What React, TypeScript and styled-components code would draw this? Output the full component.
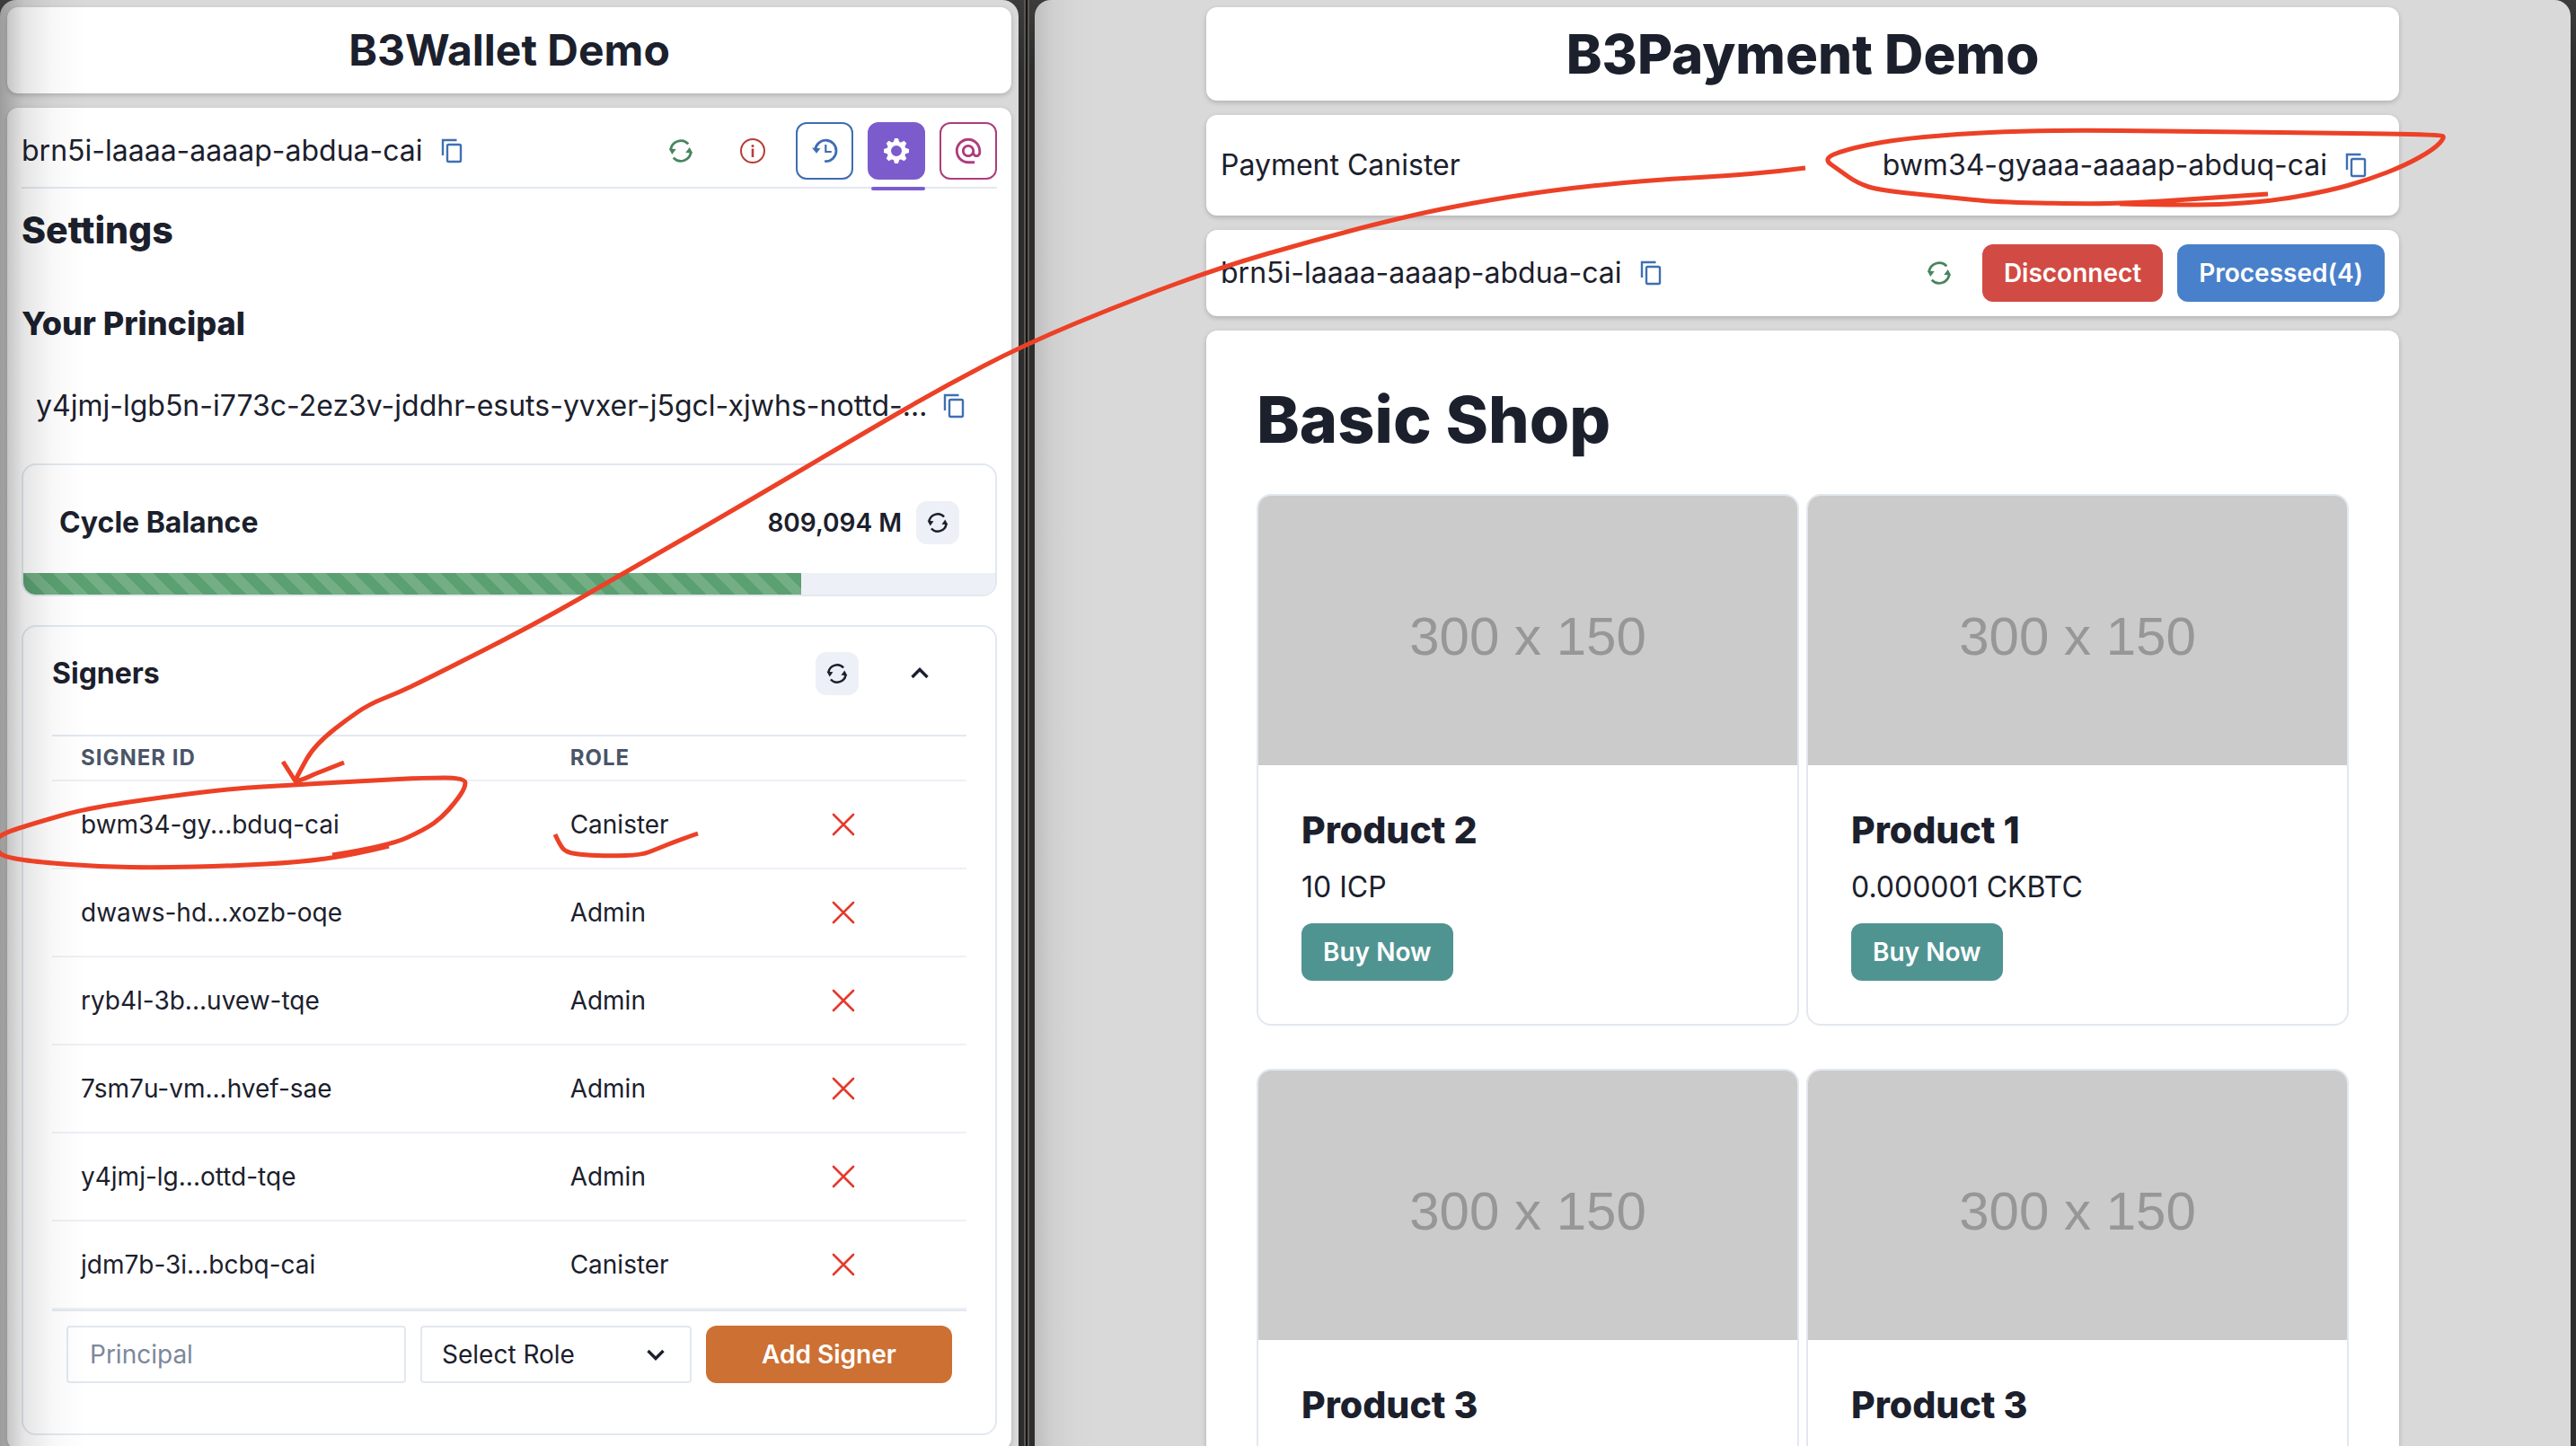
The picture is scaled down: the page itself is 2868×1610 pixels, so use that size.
import React from 'react';
import styled, { createGlobalStyle, css } from 'styled-components';
import { MdAlternateEmail } from 'react-icons/md';

const ink = '#1b202c';
const line = '#e2e8f0';
const softLine = '#edf0f6';

const GlobalStyle = createGlobalStyle`
  *, *::before, *::after { box-sizing: border-box; }
  body {
    margin: 0;
    background: #2e2e2e;
    color: ${ink};
    font-family: Inter, 'Liberation Sans', sans-serif;
    font-size: 32px;
    line-height: 48px;
  }
  h1, h2, h3, p { margin: 0; }
  button, input, select { font: inherit; color: inherit; margin: 0; }
`;

/* ---------- desktop and windows ---------- */

const Desktop = styled.div`
  position: relative;
  display: grid;
  grid-template-columns: minmax(0, 63fr) 18px minmax(0, 95fr) 6px;
  height: 100vh;
  overflow: hidden;
  background: linear-gradient(#3c3c3c, #2d2d2d 80px);
`;

const Seam = styled.div`
  width: 6px;
  justify-self: center;
  background: #17120a;
  border: solid #565656;
  border-width: 0 2px;
`;

const Window = styled.div<{ $shade: number; $reach: number }>`
  position: relative;
  overflow: hidden;
  border-radius: 18px 18px 0 0;
  background: #d9d9d9;

  &::after {
    content: '';
    position: absolute;
    inset: 0 auto 0 0;
    width: ${(p) => p.$reach}px;
    background: linear-gradient(
      to right,
      rgba(0, 0, 0, ${(p) => p.$shade}),
      rgba(0, 0, 0, ${(p) => p.$shade * 0.36}) 28%,
      rgba(0, 0, 0, ${(p) => p.$shade * 0.1}) 62%,
      transparent
    );
    pointer-events: none;
  }
`;

const Stack = styled.main<{ $max?: number }>`
  display: flex;
  flex-direction: column;
  gap: 16px;
  width: 100%;
  max-width: ${(p) => (p.$max ? `${p.$max}px` : 'none')};
  margin: 0 auto;
  padding: 8px ${(p) => (p.$max ? 0 : 8)}px;
`;

const Card = styled.section<{ $pad?: string }>`
  border-radius: 12px;
  padding: ${(p) => p.$pad ?? '16px'};
  background: #fff;
  box-shadow: 0 2px 6px rgba(0, 0, 0, 0.12), 0 2px 4px rgba(0, 0, 0, 0.08);
`;

const PageTitle = styled.h1<{ $size: number; $weight?: number }>`
  font-size: ${(p) => p.$size}px;
  font-weight: ${(p) => p.$weight ?? 700};
  line-height: 72px;
  text-align: center;
`;

const Row = styled.div<{ $gap?: number; $pad?: string }>`
  display: flex;
  align-items: center;
  gap: ${(p) => p.$gap ?? 16}px;
  padding: ${(p) => p.$pad ?? '0'};
`;

const Grow = styled.span`
  flex: 1;
  min-width: 0;
`;

/* ---------- buttons ---------- */

const Button = styled.button<{ $bg: string }>`
  height: 64px;
  padding: 0 24px;
  border: 0;
  border-radius: 12px;
  background: ${(p) => p.$bg};
  color: #fff;
  font-size: 28px;
  font-weight: 600;
  white-space: nowrap;
`;

const IconButton = styled.button<{ $color?: string; $outline?: boolean; $active?: boolean; $small?: boolean; $fill?: string }>`
  position: relative;
  display: inline-flex;
  flex: none;
  align-items: center;
  justify-content: center;
  width: ${(p) => (p.$small ? 48 : 64)}px;
  height: ${(p) => (p.$small ? 48 : 64)}px;
  padding: 0;
  border: 2px solid ${(p) => (p.$outline ? p.$color : 'transparent')};
  border-radius: 12px;
  background: ${(p) => p.$fill ?? 'transparent'};
  color: ${(p) => p.$color ?? ink};

  ${(p) =>
    p.$active &&
    css`
      border-color: #7c5ccd;
      background: #7c5ccd;
      color: #fff;

      &::after {
        content: '';
        position: absolute;
        right: -2px;
        bottom: -14px;
        left: 2px;
        height: 4px;
        border-radius: 2px;
        background: #7c5ccd;
      }
    `}
`;

/* ---------- icons ---------- */

const CopyIcon = () => (
  <svg width="24" height="28" viewBox="0 0 24 28" fill="none" stroke="#3f6fb3" strokeWidth="2.4">
    <path d="M2 19V2h15.500" />
    <rect x="7" y="7" width="15" height="19" rx="1.5" />
  </svg>
);

const RefreshIcon = ({ size = 28 }: { size?: number }) => (
  <svg width={size} height={size} viewBox="-14 -14 28 28" fill="none" stroke="currentColor" strokeWidth="2.8">
    <path d="M-11.200-1.500A11.300 11.300 0 0 1 8.300-7.600" />
    <path d="M11.200 1.500A11.300 11.300 0 0 1-8.300 7.600" />
    <path d="M-13.300-2.500-5.300-2-9.700 4Z" fill="currentColor" stroke="none" />
    <path d="M13.300 2.500 5.300 2 9.700-4Z" fill="currentColor" stroke="none" />
  </svg>
);

const InfoIcon = () => (
  <svg width="28" height="28" viewBox="-14 -14 28 28" fill="none" stroke="currentColor" strokeWidth="2">
    <circle r="13" />
    <path d="M0-2.500V7" strokeWidth="2.6" />
    <circle cy="-5.5" r="1.5" fill="currentColor" stroke="none" />
  </svg>
);

const HistoryIcon = () => (
  <svg width="30" height="28" viewBox="-15 -14 30 28" fill="none" stroke="currentColor" strokeWidth="2.8">
    <path d="M-10.300-1.500A11.700 11.700 0 1 1 1.200 11.600" strokeLinecap="round" />
    <path d="M-14-3.500-4.500-2.800-9 2.800Z" fill="currentColor" stroke="none" />
    <path d="M1.300-7V1h6.500" strokeWidth="2.2" />
  </svg>
);

const GearIcon = () => (
  <svg width="28" height="28" viewBox="-14 -14 28 28" fill="none">
    <circle r="8.3" stroke="currentColor" strokeWidth="4.6" />
    {[0, 45, 90, 135, 180, 225, 270, 315].map((a) => (
      <path key={a} d="M-3.400-9.500-1.900-14H1.900L3.400-9.500Z" fill="currentColor" transform={`rotate(${a})`} />
    ))}
  </svg>
);

const ChevronIcon = ({ down }: { down?: boolean }) => (
  <svg width="24" height="24" viewBox="-12 -12 24 24" fill="none" stroke="currentColor" strokeWidth="3.4">
    <path d={down ? 'M-8.500-4 0 4.500 8.500-4' : 'M-8.500 4 0-4.500 8.500 4'} />
  </svg>
);

const CrossIcon = () => (
  <svg width="28" height="28" viewBox="-14 -14 28 28" stroke="#e5392c" strokeWidth="2.6" strokeLinecap="round">
    <path d="M-11-11 11 11M11-11-11 11" />
  </svg>
);

/* ---------- wallet ---------- */

const Toolbar = styled.header`
  display: flex;
  align-items: center;
  gap: 16px;
  padding-bottom: 8px;
  border-bottom: 2px solid ${line};
`;

const Heading = styled.h2<{ $size: number; $pad?: string; $weight?: number }>`
  padding: ${(p) => p.$pad ?? '0'};
  font-size: ${(p) => p.$size}px;
  font-weight: ${(p) => p.$weight ?? 800};
  line-height: 48px;
`;

const RowHeading = styled(Heading)`
  flex: 1;
  min-width: 0;
`;

const Principal = styled.span`
  flex: 1;
  min-width: 0;
  overflow: hidden;
  text-overflow: ellipsis;
  white-space: nowrap;
`;

const Box = styled.section<{ $pad?: string }>`
  margin-top: 32px;
  padding: ${(p) => p.$pad ?? '0'};
  overflow: hidden;
  border: 2px solid ${line};
  border-radius: 16px;
`;

const Amount = styled.span`
  font-size: 28px;
  font-weight: 600;
`;

const Track = styled.div`
  height: 24px;
  background: #edf0f6;
`;

const Bar = styled.div`
  height: 100%;
  background: #5aa070
    linear-gradient(
      45deg,
      rgba(255, 255, 255, 0.15) 25%,
      transparent 25% 50%,
      rgba(255, 255, 255, 0.15) 50% 75%,
      transparent 75%
    )
    0 0 / 32px 32px;
`;

const Table = styled.table`
  width: 100%;
  margin-top: 44px;
  border-collapse: separate;
  border-spacing: 0;
  border-top: 2px solid ${line};
  border-bottom: 2px solid ${line};
  table-layout: fixed;
  font-size: 28px;
  text-align: left;
`;

const Col = styled.col<{ $width: string }>`
  width: ${(p) => p.$width};
`;

const Th = styled.th`
  height: 50px;
  padding: 0 32px;
  border-bottom: 2px solid ${softLine};
  color: #4a5568;
  font-size: 24px;
  line-height: 32px;
  letter-spacing: 1px;
`;

const Td = styled.td`
  height: 98px;
  padding: 0 32px;
  border-bottom: 2px solid ${softLine};
`;

const RemoveButton = styled.button`
  display: flex;
  padding: 0;
  border: 0;
  background: none;
`;

const SignerForm = styled.form`
  display: grid;
  grid-template-columns: 378fr 302fr 274fr;
  gap: 16px;
  padding: 16px;
  font-size: 28px;
`;

const Input = styled.input`
  width: 100%;
  height: 64px;
  padding: 0 24px;
  border: 2px solid ${line};
  border-radius: 4px;
  background: #fff;
  outline: 0;

  &::placeholder {
    color: #7c879b;
    opacity: 1;
  }
`;

const SelectWrap = styled.div`
  position: relative;

  svg {
    position: absolute;
    top: 20px;
    right: 28px;
    pointer-events: none;
  }
`;

const Select = styled.select`
  width: 100%;
  height: 64px;
  padding: 0 64px 0 22px;
  appearance: none;
  border: 2px solid ${line};
  border-radius: 4px;
  background: #fff;
`;

const signers = [
  ['bwm34-gy...bduq-cai', 'Canister'],
  ['dwaws-hd...xozb-oqe', 'Admin'],
  ['ryb4l-3b...uvew-tqe', 'Admin'],
  ['7sm7u-vm...hvef-sae', 'Admin'],
  ['y4jmj-lg...ottd-tqe', 'Admin'],
  ['jdm7b-3i...bcbq-cai', 'Canister'],
];

const cycleShare = 80;

const Wallet = () => (
  <Stack>
    <Card $pad="12px 16px">
      <PageTitle $size={48}>B3Wallet Demo</PageTitle>
    </Card>
    <Card>
      <Toolbar>
        <Row as={Grow} $gap={8}>
          brn5i-laaaa-aaaap-abdua-cai
          <IconButton $small aria-label="Copy wallet canister"><CopyIcon /></IconButton>
        </Row>
        <IconButton $color="#48855e" aria-label="Refresh"><RefreshIcon /></IconButton>
        <IconButton $color="#b93c36" aria-label="Info"><InfoIcon /></IconButton>
        <IconButton $color="#3f6db1" $outline aria-label="History"><HistoryIcon /></IconButton>
        <IconButton $active aria-label="Settings"><GearIcon /></IconButton>
        <IconButton $color="#ad3d7d" $outline aria-label="Address"><MdAlternateEmail size={34} /></IconButton>
      </Toolbar>
      <Heading $size={41} $pad="22px 0 0">Settings</Heading>
      <Heading as="h3" $size={36} $pad="56px 0 0">Your Principal</Heading>
      <Row $gap={4} $pad="44px 24px 8px 16px">
        <Principal>y4jmj-lgb5n-i773c-2ez3v-jddhr-esuts-yvxer-j5gcl-xjwhs-nottd-tqe</Principal>
        <IconButton $small aria-label="Copy principal"><CopyIcon /></IconButton>
      </Row>
      <Box>
        <Row $pad="40px 40px 32px">
          <RowHeading as="h3" $size={32} $weight={700}>Cycle Balance</RowHeading>
          <Amount>809,094 M</Amount>
          <IconButton $small $fill="#edf0f6" aria-label="Refresh balance"><RefreshIcon size={24} /></IconButton>
        </Row>
        <Track role="progressbar" aria-label="Cycle balance" aria-valuenow={cycleShare} aria-valuemin={0} aria-valuemax={100}>
          <Bar style={{ width: `${cycleShare}%` }} />
        </Track>
      </Box>
      <Box $pad="28px 32px 40px">
        <Row $gap={44} $pad="0 28px 0 0">
          <RowHeading as="h3" $size={32} $weight={700}>Signers</RowHeading>
          <IconButton $small $fill="#edf0f6" aria-label="Refresh signers"><RefreshIcon size={24} /></IconButton>
          <IconButton $small aria-label="Collapse signers"><ChevronIcon /></IconButton>
        </Row>
        <Table>
          <colgroup>
            <Col $width="53.5%" />
            <Col $width="28.5%" />
            <Col $width="18%" />
          </colgroup>
          <thead>
            <tr><Th>SIGNER ID</Th><Th>ROLE</Th><Th aria-label="Remove" /></tr>
          </thead>
          <tbody>
            {signers.map(([id, role]) => (
              <tr key={id}>
                <Td>{id}</Td>
                <Td>{role}</Td>
                <Td><RemoveButton aria-label={`Remove ${id}`}><CrossIcon /></RemoveButton></Td>
              </tr>
            ))}
          </tbody>
        </Table>
        <SignerForm onSubmit={(e) => e.preventDefault()}>
          <Input placeholder="Principal" aria-label="Principal" />
          <SelectWrap>
            <Select aria-label="Role" defaultValue="">
              <option value="">Select Role</option>
              <option>Admin</option>
              <option>Canister</option>
            </Select>
            <ChevronIcon down />
          </SelectWrap>
          <Button type="submit" $bg="#cd7033">Add Signer</Button>
        </SignerForm>
      </Box>
    </Card>
  </Stack>
);

/* ---------- shop ---------- */

const ShopTitle = styled.h2`
  margin-bottom: 40px;
  font-size: 72px;
  font-weight: 800;
  line-height: 86px;
`;

const Products = styled.div`
  display: grid;
  grid-template-columns: 1fr 1fr;
  gap: 48px 8px;
`;

const Product = styled.article`
  overflow: hidden;
  border: 2px solid ${line};
  border-radius: 16px;
`;

const Thumb = styled.div`
  display: flex;
  align-items: center;
  justify-content: center;
  height: 300px;
  padding-top: 12px;
  background: #cbcbcb;
  color: #979797;
  font: 60px 'Liberation Sans', Arial, sans-serif;
`;

const ProductBody = styled.div`
  display: flex;
  flex-direction: column;
  align-items: flex-start;
  gap: 16px;
  padding: 48px;
`;

const products = [
  ['Product 2', '10 ICP'],
  ['Product 1', '0.000001 CKBTC'],
  ['Product 3', '10 ICP'],
  ['Product 3', '10 ICP'],
];

const Shop = () => (
  <Stack $max={1328}>
    <Card>
      <PageTitle $size={60} $weight={800}>B3Payment Demo</PageTitle>
    </Card>
    <Card $pad="32px 24px 32px 16px">
      <Row $gap={8}>
        <Grow>Payment Canister</Grow>
        bwm34-gyaaa-aaaap-abduq-cai
        <IconButton $small aria-label="Copy payment canister"><CopyIcon /></IconButton>
      </Row>
    </Card>
    <Card>
      <Row>
        <Row as={Grow} $gap={8}>
          brn5i-laaaa-aaaap-abdua-cai
          <IconButton $small aria-label="Copy wallet canister"><CopyIcon /></IconButton>
        </Row>
        <IconButton $color="#48855e" aria-label="Refresh"><RefreshIcon /></IconButton>
        <Button $bg="#d14b44">Disconnect</Button>
        <Button $bg="#4980cb">Processed(4)</Button>
      </Row>
    </Card>
    <Card $pad="56px">
      <ShopTitle>Basic Shop</ShopTitle>
      <Products>
        {products.map(([name, price], i) => (
          <Product key={i}>
            <Thumb>300 x 150</Thumb>
            <ProductBody>
              <Heading as="h3" $size={41}>{name}</Heading>
              <p>{price}</p>
              <Button $bg="#509492">Buy Now</Button>
            </ProductBody>
          </Product>
        ))}
      </Products>
    </Card>
  </Stack>
);

/* ---------- hand-drawn marker notes ---------- */

const Ink = styled.svg`
  position: absolute;
  top: 0;
  left: 0;
  width: 100%;
  height: auto;
  pointer-events: none;
`;

type Point = [number, number];

const curve = (pts: Point[]) => {
  let d = `M${pts[0].join(' ')}`;
  for (let i = 1; i < pts.length - 1; i++) {
    const [x, y] = pts[i];
    const [nx, ny] = pts[i + 1];
    const end = i === pts.length - 2 ? [nx, ny] : [(x + nx) / 2, (y + ny) / 2];
    d += `Q${x} ${y} ${end[0]} ${end[1]}`;
  }
  return d;
};

const arrow: Point[] = [
  [2010, 187], [1955, 194], [1829, 201], [1725, 212], [1639, 226], [1565, 241], [1461, 268], [1361, 297],
  [1255, 336], [1140, 384], [1050, 431], [962, 482], [830, 560], [695, 638], [592, 697], [473, 757],
  [444, 771], [411, 784], [385, 802], [362, 820], [346, 837], [337, 853], [328, 870],
];

const signerLoop: Point[] = [
  [370, 952], [433, 942], [474, 923], [492, 910], [507, 893], [518, 877], [518, 866], [473, 866],
  [414, 869], [325, 874], [259, 878], [185, 887], [96, 900], [37, 917], [3, 928], [-5, 936],
  [-3, 949], [9, 955], [44, 960], [111, 965], [177, 966], [259, 964], [333, 960], [392, 952], [433, 942],
];

const roleMark: Point[] = [
  [618, 929], [623, 940], [630, 949], [651, 952], [679, 953], [714, 952], [732, 945], [754, 936], [777, 928],
];

const canisterLoop: Point[] = [
  [2525, 216], [2435, 222], [2377, 226], [2319, 227], [2221, 225], [2174, 220], [2093, 212], [2068, 204],
  [2047, 189], [2030, 177], [2053, 167], [2105, 156], [2180, 149], [2250, 146], [2331, 145], [2481, 147],
  [2597, 148], [2717, 150], [2722, 153], [2710, 166], [2678, 184], [2637, 200], [2591, 213], [2522, 225],
  [2441, 229], [2360, 227],
];

const Notes = () => (
  <Ink viewBox="0 0 2868 1610" fill="none" stroke="#ec4127" strokeWidth="5" strokeLinejoin="round" aria-hidden="true">
    <path d={curve(arrow)} />
    <path d="M315 848 329 870Q338 868 350 862L383 849" />
    <path d={curve(signerLoop)} />
    <path d={curve(roleMark)} />
    <path d={curve(canisterLoop)} />
  </Ink>
);

export default function App() {
  return (
    <>
      <GlobalStyle />
      <Desktop>
        <Window $shade={0.28} $reach={96}><Wallet /></Window>
        <Seam />
        <Window $shade={0.12} $reach={72}><Shop /></Window>
        <Notes />
      </Desktop>
    </>
  );
}
